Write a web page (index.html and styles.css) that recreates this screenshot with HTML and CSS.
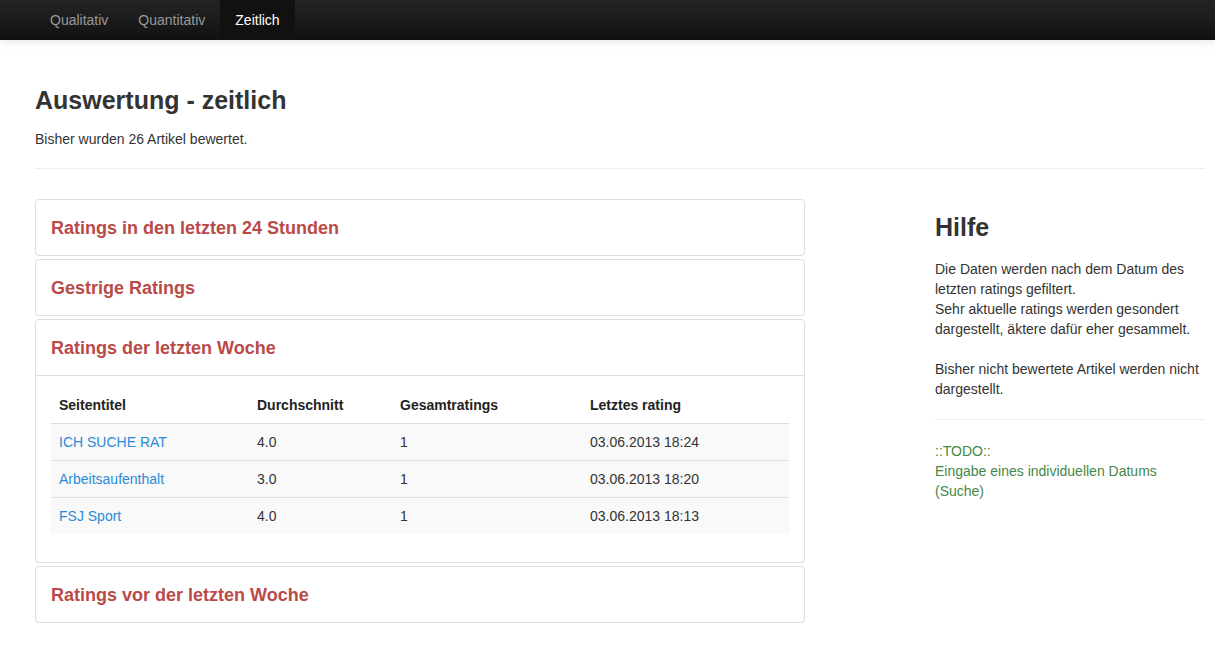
FILE: index.html
```html
<!DOCTYPE html>
<html lang="de">
<head>
<meta charset="utf-8">
<title>Auswertung - zeitlich</title>
<link rel="stylesheet" href="styles.css">
</head>
<body>
<div class="navbar">
  <ul class="nav">
    <li><a href="#">Qualitativ</a></li>
    <li><a href="#">Quantitativ</a></li>
    <li class="active"><a href="#">Zeitlich</a></li>
  </ul>
</div>
<div class="container">
  <div class="page-header">
    <h1>Auswertung - zeitlich</h1>
    <p>Bisher wurden 26 Artikel bewertet.</p>
  </div>
  <div class="row">
    <div class="main">
      <div class="panel">
        <div class="panel-heading"><h3>Ratings in den letzten 24 Stunden</h3></div>
      </div>
      <div class="panel">
        <div class="panel-heading"><h3>Gestrige Ratings</h3></div>
      </div>
      <div class="panel">
        <div class="panel-heading open"><h3>Ratings der letzten Woche</h3></div>
        <div class="panel-body">
          <table class="table">
            <thead>
              <tr><th class="c1">Seitentitel</th><th class="c2">Durchschnitt</th><th class="c3">Gesamtratings</th><th>Letztes rating</th></tr>
            </thead>
            <tbody>
              <tr><td><a href="#">ICH SUCHE RAT</a></td><td>4.0</td><td>1</td><td>03.06.2013 18:24</td></tr>
              <tr><td><a href="#">Arbeitsaufenthalt</a></td><td>3.0</td><td>1</td><td>03.06.2013 18:20</td></tr>
              <tr><td><a href="#">FSJ Sport</a></td><td>4.0</td><td>1</td><td>03.06.2013 18:13</td></tr>
            </tbody>
          </table>
        </div>
      </div>
      <div class="panel">
        <div class="panel-heading"><h3>Ratings vor der letzten Woche</h3></div>
      </div>
    </div>
    <div class="side">
      <h2>Hilfe</h2>
      <p>Die Daten werden nach dem Datum des letzten ratings gefiltert.<br>Sehr aktuelle ratings werden gesondert dargestellt, äktere dafür eher gesammelt.</p>
      <p>Bisher nicht bewertete Artikel werden nicht dargestellt.</p>
      <hr>
      <p class="todo">::TODO::<br>Eingabe eines individuellen Datums (Suche)</p>
    </div>
  </div>
</div>
</body>
</html>
```

FILE: styles.css
```css
html, body {
  margin: 0;
  padding: 0;
  background: #fff;
}
body {
  font-family: "Liberation Sans", Arial, sans-serif;
  font-size: 14px;
  line-height: 20px;
  color: #333;
}
a {
  color: #2a8bd6;
  text-decoration: none;
}
.navbar {
  height: 40px;
  background: linear-gradient(#242424, #111);
  box-shadow: 0 1px 10px rgba(0,0,0,0.12);
}
.nav {
  list-style: none;
  margin: 0;
  padding: 0 0 0 35px;
  display: flex;
}
.nav li a {
  display: block;
  padding: 10px 15px;
  line-height: 20px;
  font-size: 14px;
  color: #999;
}
.nav li.active a {
  background: #111;
  color: #fff;
}
.container {
  width: 1170px;
  margin-left: 35px;
}
.page-header {
  margin-top: 40px;
  padding-bottom: 19px;
  border-bottom: 1px solid #eee;
}
.page-header h1 {
  margin: 0;
  font-size: 25px;
  line-height: 40px;
  font-weight: bold;
  color: #333;
}
.page-header p {
  margin: 9px 0 0;
}
.row {
  display: flex;
  justify-content: space-between;
  margin-top: 30px;
}
.main {
  width: 770px;
}
.side {
  width: 270px;
}
.panel {
  border: 1px solid #ddd;
  border-radius: 4px;
  margin-bottom: 3px;
}
.panel-heading {
  padding: 0 15px;
  height: 55px;
  display: flex;
  align-items: center;
}
.panel-heading.open {
  border-bottom: 1px solid #ddd;
}
.panel-heading h3 {
  margin: 0;
  font-size: 18px;
  font-weight: bold;
  color: #b94a48;
  line-height: 20px;
}
.panel-body {
  padding: 11px 15px 28px;
}
.table {
  width: 100%;
  border-collapse: collapse;
}
.table th, .table td {
  text-align: left;
  padding: 8px;
  line-height: 20px;
  height: 20px;
}
.table th {
  font-weight: bold;
  color: #222;
}
.table td {
  border-top: 1px solid #ddd;
  background: #f9f9f9;
  color: #333;
}
.table .c1 { width: 182px; }
.table .c2 { width: 127px; }
.table .c3 { width: 174px; }
.side h2 {
  margin: 8px 0 0;
  font-size: 25px;
  line-height: 40px;
  font-weight: bold;
  color: #333;
}
.side p {
  margin: 12px 0 0;
}
.side p + p {
  margin-top: 20px;
}
.side hr {
  border: 0;
  border-top: 1px solid #eee;
  margin: 20px 0 0;
}
.side .todo {
  margin-top: 21px;
  color: #468847;
}
```
